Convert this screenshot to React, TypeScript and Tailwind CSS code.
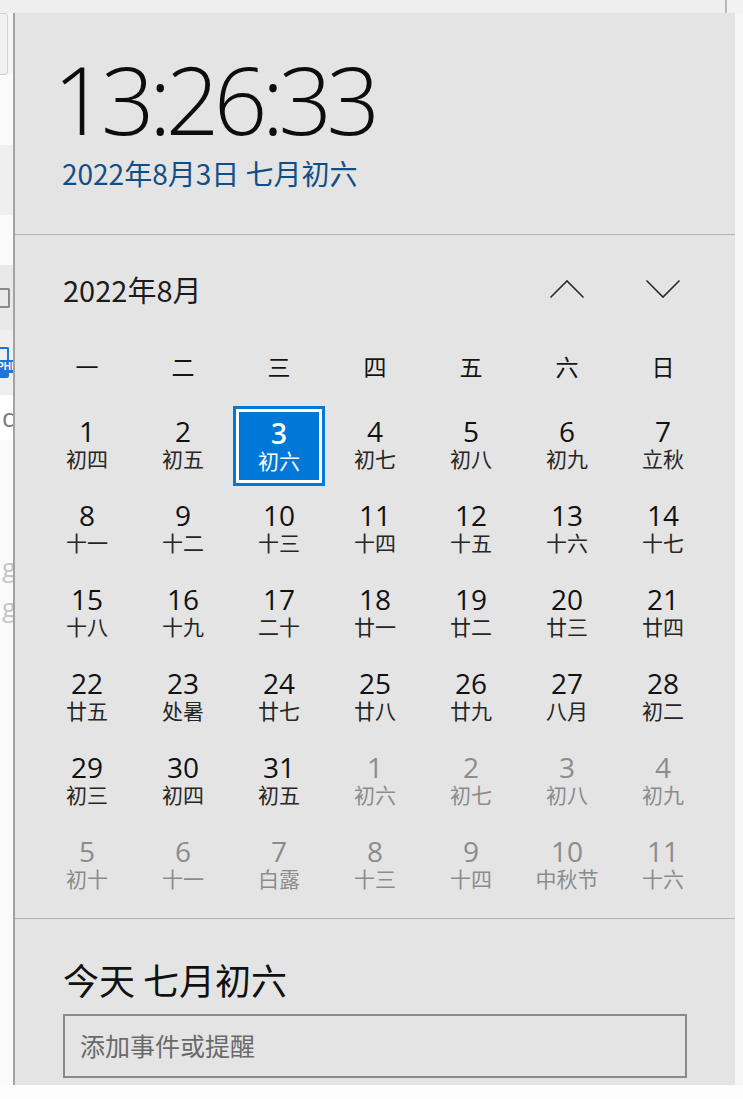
import React from 'react';

type Day = { n: number; l: string; muted?: boolean; today?: boolean };

// lunar labels for Aug 1..31 then Sep 1..11
const augLunar = [
  '初四', '初五', '初六', '初七', '初八', '初九', '立秋',
  '十一', '十二', '十三', '十四', '十五', '十六', '十七',
  '十八', '十九', '二十', '廿一', '廿二', '廿三', '廿四',
  '廿五', '处暑', '廿七', '廿八', '廿九', '八月', '初二',
  '初三', '初四', '初五',
];
const sepLunar = ['初六', '初七', '初八', '初九', '初十', '十一', '白露', '十三', '十四', '中秋节', '十六'];

const days: Day[] = [
  ...augLunar.map((l, i) => ({ n: i + 1, l, today: i + 1 === 3 })),
  ...sepLunar.map((l, i) => ({ n: i + 1, l, muted: true })),
];

const weekdays = ['一', '二', '三', '四', '五', '六', '日'];

function Chevron({ up }: { up?: boolean }) {
  return (
    <svg width="36" height="20" viewBox="0 0 36 20" fill="none">
      <path
        d={up ? 'M1.5 18.5 L18 2 L34.5 18.5' : 'M1.5 1.5 L18 18 L34.5 1.5'}
        stroke="#2b2b2b"
        strokeWidth="1.6"
      />
    </svg>
  );
}

function DayText({ d, light }: { d: Day; light?: boolean }) {
  const numColor = light ? 'text-white font-semibold' : d.muted ? 'text-[#8c8c8c]' : 'text-[#111111]';
  const lunColor = light ? 'text-white' : d.muted ? 'text-[#8c8c8c]' : 'text-[#262626]';
  return (
    <>
      <div className={`text-[28px] leading-[29px] font-['Open_Sans',sans-serif] ${numColor}`}>{d.n}</div>
      <div className={`text-[21px] leading-[24px] font-['Noto_Sans_CJK_SC',sans-serif] ${lunColor}`}>{d.l}</div>
    </>
  );
}

function Cell({ d }: { d: Day }) {
  if (d.today) {
    return (
      <div className="h-[84px] px-[2px] pt-[3px] pb-[1px]">
        <div className="h-full border-[3px] border-[#0078d7]">
          <div className="h-full border-[3px] border-white bg-[#0078d7] flex flex-col items-center justify-center pb-[2px]">
            <DayText d={d} light />
          </div>
        </div>
      </div>
    );
  }
  return (
    <div className="h-[84px] flex flex-col items-center justify-center pb-[4px]">
      <DayText d={d} />
    </div>
  );
}

function LeftStrip() {
  return (
    <div className="w-[13px] shrink-0 flex flex-col overflow-hidden bg-[#fbfbfb]">
      <div className="h-[62px] flex bg-[#f6f6f6]">
        <div className="w-[8px] h-full bg-[#f1f1f1] border-r border-y border-[#d2d2d2] rounded-r-[4px]" />
      </div>
      <div className="h-[70px]" />
      <div className="h-[70px] bg-[#efefef]" />
      <div className="h-[50px]" />
      <div className="h-[65px] bg-[#e9e9e9] flex items-center">
        <div className="w-[10px] h-[20px] border-y-2 border-r-2 border-[#8a8a8a] rounded-r-[2px]" />
      </div>
      <div className="h-[65px] bg-[#efefef] flex flex-col justify-center">
        <div className="w-[9px] h-[13px] border-t-2 border-r-2 border-[#1f74d6] rounded-tr-[2px]" />
        <div className="h-[13px] w-[16px] bg-[#1f74d6] text-white text-[10px] leading-[13px] font-bold font-['Liberation_Sans',sans-serif] -ml-[3px]">
          PHP
        </div>
        <div className="w-[9px] h-[5px] bg-[#1f74d6] rounded-br-[2px]" />
      </div>
      <div className="h-[45px] bg-white pl-[2px] text-[26px] leading-[45px] text-[#7a7a7a] font-['Open_Sans',sans-serif]">
        d
      </div>
      <div className="h-[112px]" />
      <div className="h-[40px] pl-[2px] text-[26px] leading-[30px] text-[#c4c4c4] font-['Open_Sans',sans-serif]">g</div>
      <div className="h-[40px] pl-[2px] text-[26px] leading-[30px] text-[#c4c4c4] font-['Open_Sans',sans-serif]">g</div>
    </div>
  );
}

export default function App() {
  return (
    <div className="w-[743px] h-[1099px] bg-[#fcfcfc] flex flex-col overflow-hidden">
      {/* top strip of the window behind */}
      <div className="h-[13px] shrink-0 bg-[#efefef] flex justify-end">
        <div className="w-[2px] bg-[#b9b9b9]" />
        <div className="w-[16px] bg-[#f2f2f2]" />
      </div>

      <div className="h-[1072px] shrink-0 flex">
        <LeftStrip />

        {/* calendar flyout */}
        <div className="w-[722px] shrink-0 bg-[#e4e4e4] border-l-2 border-[#a3a3a3] flex flex-col">
          {/* clock */}
          <div className="h-[222px] shrink-0 border-b border-[#b3b3b3]">
            <div className="mt-[39px] pl-[38px] text-[94px] leading-none font-light tracking-[-0.06em] text-[#0d0d0d] font-['Open_Sans',sans-serif]">
              13:26:33
            </div>
            <div className="mt-[11px] pl-[47px] text-[28px] leading-[32px] text-[#114e85] font-['Noto_Sans_CJK_SC',sans-serif]">
              2022年8月3日 七月初六
            </div>
          </div>

          {/* month */}
          <div className="h-[684px] shrink-0 border-b border-[#b3b3b3] px-[24px]">
            <div className="mt-[34px] h-[40px] flex items-center">
              <div className="flex-1 pl-[24px] text-[29px] leading-[40px] text-[#1c1c1c] font-['Noto_Sans_CJK_SC',sans-serif]">
                2022年8月
              </div>
              <div className="w-[96px] flex justify-center">
                <Chevron up />
              </div>
              <div className="w-[96px] flex justify-center">
                <Chevron />
              </div>
            </div>

            <div className="mt-[38px] h-[40px] grid grid-cols-7">
              {weekdays.map(w => (
                <div key={w} className="flex items-center justify-center pb-[2px] text-[23px] text-[#141414] font-['Noto_Sans_CJK_SC',sans-serif]">
                  {w}
                </div>
              ))}
            </div>

            <div className="mt-[16px] grid grid-cols-7">
              {days.map((d, i) => (
                <Cell key={i} d={d} />
              ))}
            </div>
          </div>

          {/* today + input */}
          <div className="flex-1 px-[48px]">
            <div className="mt-[38px] text-[36px] leading-[44px] text-[#111111] font-['Noto_Sans_CJK_SC',sans-serif]">
              今天 七月初六
            </div>
            <div className="mt-[13px] h-[64px] border-2 border-[#8a8a8a] flex items-center pl-[15px] text-[25px] text-[#6a6a6a] font-['Noto_Sans_CJK_SC',sans-serif]">
              添加事件或提醒
            </div>
          </div>
        </div>

        <div className="flex-1 bg-[#f6f6f6]" />
      </div>

      <div className="flex-1 bg-[#fcfcfc]" />
    </div>
  );
}
